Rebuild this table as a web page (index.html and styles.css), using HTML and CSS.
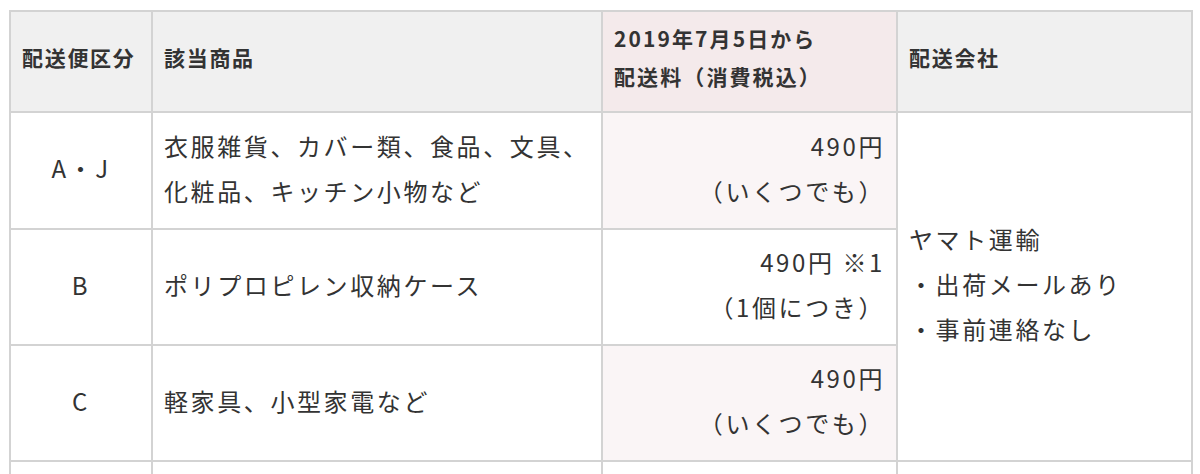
FILE: index.html
```html
<!DOCTYPE html>
<html lang="ja">
<head>
<meta charset="utf-8">
<title>配送料</title>
<link rel="stylesheet" href="styles.css">
</head>
<body>
<div class="page">
  <table class="ship">
    <thead>
      <tr class="head-row">
        <th class="c1">配送便区分</th>
        <th class="c2">該当商品</th>
        <th class="c3 pink-head">2019年7月5日から<br>配送料（消費税込）</th>
        <th class="c4">配送会社</th>
      </tr>
    </thead>
    <tbody>
      <tr class="r1">
        <td class="cls">A・J</td>
        <td class="goods">衣服雑貨、カバー類、食品、文具、<br>化粧品、キッチン小物など</td>
        <td class="fee pink">490円<br>（いくつでも）</td>
        <td class="carrier" rowspan="3">ヤマト運輸<br>・出荷メールあり<br>・事前連絡なし</td>
      </tr>
      <tr class="r2">
        <td class="cls">B</td>
        <td class="goods">ポリプロピレン収納ケース</td>
        <td class="fee">490円 ※1<br>（1個につき）</td>
      </tr>
      <tr class="r3">
        <td class="cls">C</td>
        <td class="goods">軽家具、小型家電など</td>
        <td class="fee pink">490円<br>（いくつでも）</td>
      </tr>
      <tr class="r4">
        <td class="cls"></td>
        <td class="goods"></td>
        <td class="fee"></td>
        <td class="carrier"></td>
      </tr>
    </tbody>
  </table>
</div>
</body>
</html>
```

FILE: styles.css
```css
html, body {
  margin: 0;
  padding: 0;
  background: #ffffff;
}

body {
  font-family: "Noto Sans CJK JP", "Noto Sans", sans-serif;
  color: #333333;
}

.page {
  padding: 10px 0 0 9px;
}

.ship {
  border-collapse: separate;
  border-spacing: 0;
  table-layout: fixed;
  width: 1184px;
  border-top: 2px solid #d3d3d3;
  border-left: 2px solid #d3d3d3;
}

.ship th,
.ship td {
  border-right: 2px solid #d3d3d3;
  border-bottom: 2px solid #d3d3d3;
  padding: 0 11px;
  vertical-align: middle;
  white-space: nowrap;
}

.c1 { width: 118px; }
.c2 { width: 426px; }
.c3 { width: 271px; }
.c4 { width: 271px; }

.ship th {
  background: #f0f0f0;
  font-weight: 700;
  font-size: 21px;
  letter-spacing: 1.7px;
  line-height: 38px;
  text-align: left;
  height: 90px;
  padding-top: 0;
  padding-bottom: 9px;
}

.ship th.pink-head {
  background: #f4eaeb;
  letter-spacing: 2.1px;
}

.ship td {
  font-size: 24px;
  letter-spacing: 2.6px;
  line-height: 45px;
  padding-top: 0;
  padding-bottom: 6px;
}

.r1 td { height: 109px; }
.r2 td { height: 108px; }
.r3 td { height: 108px; }
.r4 td { height: 108px; }

.cls {
  text-align: center;
}

.goods {
  text-align: left;
}

.fee {
  text-align: right;
}

.fee.pink {
  background: #faf5f6;
}

.carrier {
  text-align: left;
}
```
